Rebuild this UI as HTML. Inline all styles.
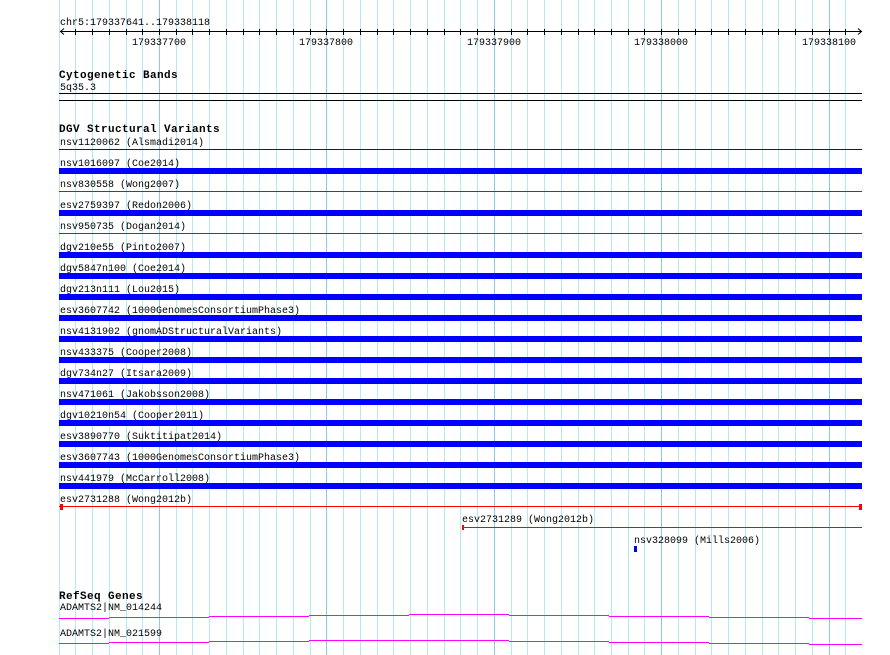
<!DOCTYPE html>
<html><head><meta charset="utf-8"><style>
html,body{margin:0;padding:0;background:#fff;width:890px;height:655px;overflow:hidden}
svg text{font-family:"Liberation Mono",monospace;font-size:10px;fill:#000}
svg text.b{font-weight:bold;font-size:11px;letter-spacing:0.4px}
</style></head><body>
<svg width="890" height="655" xmlns="http://www.w3.org/2000/svg" shape-rendering="crispEdges" style="display:block">
<path stroke="#b0ecf0" stroke-width="1" fill="none" d="M59.5 0V655M75.5 0V655M92.5 0V655M109.5 0V655M126.5 0V655M142.5 0V655M176.5 0V655M192.5 0V655M209.5 0V655M226.5 0V655M243.5 0V655M259.5 0V655M276.5 0V655M293.5 0V655M310.5 0V655M343.5 0V655M360.5 0V655M377.5 0V655M393.5 0V655M410.5 0V655M427.5 0V655M444.5 0V655M460.5 0V655M477.5 0V655M511.5 0V655M527.5 0V655M544.5 0V655M561.5 0V655M578.5 0V655M594.5 0V655M611.5 0V655M628.5 0V655M644.5 0V655M678.5 0V655M695.5 0V655M711.5 0V655M728.5 0V655M745.5 0V655M762.5 0V655M778.5 0V655M795.5 0V655M812.5 0V655M845.5 0V655"/>
<path stroke="#8cc8e8" stroke-width="1" fill="none" d="M159.5 0V655M326.5 0V655M494.5 0V655M661.5 0V655M829.5 0V655"/>
<rect x="60" y="31" width="802" height="1" fill="#000"/>
<path d="M64 28.5 L60.5 31.5 L64 34.5 M858 28.5 L861.5 31.5 L858 34.5" stroke="#000" fill="none" shape-rendering="auto"/>
<path stroke="#000" stroke-width="1" fill="none" d="M75.5 29V35M92.5 29V35M109.5 29V35M126.5 29V35M142.5 29V35M159.5 29V35M176.5 29V35M192.5 29V35M209.5 29V35M226.5 29V35M243.5 29V35M259.5 29V35M276.5 29V35M293.5 29V35M310.5 29V35M326.5 29V35M343.5 29V35M360.5 29V35M377.5 29V35M393.5 29V35M410.5 29V35M427.5 29V35M444.5 29V35M460.5 29V35M477.5 29V35M494.5 29V35M511.5 29V35M527.5 29V35M544.5 29V35M561.5 29V35M578.5 29V35M594.5 29V35M611.5 29V35M628.5 29V35M644.5 29V35M661.5 29V35M678.5 29V35M695.5 29V35M711.5 29V35M728.5 29V35M745.5 29V35M762.5 29V35M778.5 29V35M795.5 29V35M812.5 29V35M829.5 29V35M845.5 29V35"/>
<text x="60" y="25">chr5:179337641..179338118</text>
<text x="132" y="45">179337700</text>
<text x="299" y="45">179337800</text>
<text x="467" y="45">179337900</text>
<text x="634" y="45">179338000</text>
<text x="802" y="45">179338100</text>

<text class="b" x="59" y="78">Cytogenetic Bands</text>
<text x="60" y="90">5q35.3</text>
<rect x="59" y="93" width="803" height="1" fill="#000"/>
<rect x="59" y="100" width="803" height="1" fill="#000"/>

<text class="b" x="59" y="132">DGV Structural Variants</text>

<text x="60" y="145">nsv1120062 (Alsmadi2014)</text>
<rect x="59" y="149" width="803" height="1" fill="#400060"/>
<text x="60" y="166">nsv1016097 (Coe2014)</text>
<rect x="59" y="168" width="803" height="6" fill="#0000ff"/>
<text x="60" y="187">nsv830558 (Wong2007)</text>
<rect x="59" y="191" width="803" height="1" fill="#e00000"/>
<text x="60" y="208">esv2759397 (Redon2006)</text>
<rect x="59" y="210" width="803" height="6" fill="#0000ff"/>
<text x="60" y="229">nsv950735 (Dogan2014)</text>
<rect x="59" y="233" width="803" height="1" fill="#e00000"/>
<text x="60" y="250">dgv210e55 (Pinto2007)</text>
<rect x="59" y="252" width="803" height="6" fill="#0000ff"/>
<text x="60" y="271">dgv5847n100 (Coe2014)</text>
<rect x="59" y="273" width="803" height="6" fill="#0000ff"/>
<text x="60" y="292">dgv213n111 (Lou2015)</text>
<rect x="59" y="294" width="803" height="6" fill="#0000ff"/>
<text x="60" y="313">esv3607742 (1000GenomesConsortiumPhase3)</text>
<rect x="59" y="315" width="803" height="6" fill="#0000ff"/>
<text x="60" y="334">nsv4131902 (gnomADStructuralVariants)</text>
<rect x="59" y="336" width="803" height="6" fill="#0000ff"/>
<text x="60" y="355">nsv433375 (Cooper2008)</text>
<rect x="59" y="357" width="803" height="6" fill="#0000ff"/>
<text x="60" y="376">dgv734n27 (Itsara2009)</text>
<rect x="59" y="378" width="803" height="6" fill="#0000ff"/>
<text x="60" y="397">nsv471061 (Jakobsson2008)</text>
<rect x="59" y="399" width="803" height="6" fill="#0000ff"/>
<text x="60" y="418">dgv10210n54 (Cooper2011)</text>
<rect x="59" y="420" width="803" height="6" fill="#0000ff"/>
<text x="60" y="439">esv3890770 (Suktitipat2014)</text>
<rect x="59" y="441" width="803" height="6" fill="#0000ff"/>
<text x="60" y="460">esv3607743 (1000GenomesConsortiumPhase3)</text>
<rect x="59" y="462" width="803" height="6" fill="#0000ff"/>
<text x="60" y="481">nsv441979 (McCarroll2008)</text>
<rect x="59" y="483" width="803" height="6" fill="#0000ff"/>
<text x="60" y="502">esv2731288 (Wong2012b)</text>
<rect x="59" y="506" width="803" height="1" fill="#ff0000"/>
<rect x="60" y="504" width="3" height="6" fill="#ff0000"/>
<rect x="859" y="504" width="3" height="6" fill="#ff0000"/>

<text x="462" y="522">esv2731289 (Wong2012b)</text>
<rect x="462" y="527" width="400" height="1" fill="#ff0000"/>
<rect x="462" y="525" width="2" height="5" fill="#ff0000"/>
<text x="634" y="543">nsv328099 (Mills2006)</text>
<rect x="634" y="546" width="3" height="6" fill="#0000ff"/>

<text class="b" x="59" y="599">RefSeq Genes</text>
<text x="60" y="610">ADAMTS2|NM_014244</text>
<text x="60" y="636">ADAMTS2|NM_021599</text>
<g fill="#ff00ff">
<rect x="59" y="618" width="50" height="1"/>
<rect x="109" y="617" width="100" height="1"/>
<rect x="209" y="616" width="100" height="1"/>
<rect x="309" y="615" width="100" height="1"/>
<rect x="409" y="614" width="100" height="1"/>
<rect x="509" y="615" width="100" height="1"/>
<rect x="609" y="616" width="100" height="1"/>
<rect x="709" y="617" width="100" height="1"/>
<rect x="809" y="618" width="53" height="1"/>
<rect x="59" y="643" width="50" height="1"/>
<rect x="109" y="642" width="100" height="1"/>
<rect x="209" y="641" width="100" height="1"/>
<rect x="309" y="640" width="100" height="1"/>
<rect x="409" y="640" width="100" height="1"/>
<rect x="509" y="641" width="100" height="1"/>
<rect x="609" y="642" width="100" height="1"/>
<rect x="709" y="643" width="100" height="1"/>
<rect x="809" y="644" width="53" height="1"/>
</g>
</svg>
</body></html>
